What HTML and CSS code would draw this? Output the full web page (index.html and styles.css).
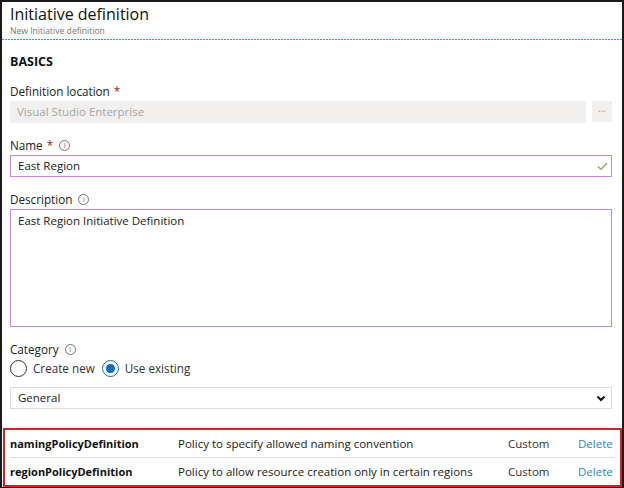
FILE: index.html
```html
<!DOCTYPE html>
<html>
<head>
<meta charset="utf-8">
<link rel="stylesheet" href="styles.css">
</head>
<body>
<div class="frame">
  <header class="head">
    <div class="title">Initiative definition</div>
    <div class="subtitle">New Initiative definition</div>
  </header>
  <div class="form">
    <div class="section">BASICS</div>
    <div class="field loc">
      <div class="label">Definition location <span class="req">*</span></div>
      <div class="row">
        <div class="input disabled">Visual Studio Enterprise</div>
        <div class="dots">...</div>
      </div>
    </div>
    <div class="field">
      <div class="label">Name <span class="req">*</span> <span class="info">i</span></div>
      <div class="input active">East Region
        <svg class="check" width="11" height="9" viewBox="0 0 11 9"><path d="M1 4.5 L4 7.5 L10 1" fill="none" stroke="#7cae5a" stroke-width="1.2"/></svg>
      </div>
    </div>
    <div class="field">
      <div class="label">Description <span class="info">i</span></div>
      <div class="textarea">East Region Initiative Definition</div>
    </div>
    <div class="field cat">
      <div class="label">Category <span class="info">i</span></div>
      <div class="radios">
        <span class="radio"></span><span class="rlabel">Create new</span>
        <span class="radio on"></span><span class="rlabel">Use existing</span>
      </div>
      <div class="select">General
        <svg class="chev" width="10" height="7" viewBox="0 0 10 7"><path d="M1.5 1.5 L5 5 L8.5 1.5" fill="none" stroke="#111" stroke-width="2"/></svg>
      </div>
    </div>
  </div>
  <div class="table">
    <div class="trow">
      <span class="c1">namingPolicyDefinition</span>
      <span class="c2">Policy to specify allowed naming convention</span>
      <span class="c3">Custom</span>
      <span class="c4">Delete</span>
    </div>
    <div class="trow">
      <span class="c1">regionPolicyDefinition</span>
      <span class="c2">Policy to allow resource creation only in certain regions</span>
      <span class="c3">Custom</span>
      <span class="c4">Delete</span>
    </div>
  </div>
</div>
</body>
</html>
```
FILE: styles.css
```css
* { box-sizing: border-box; }
html, body { margin: 0; padding: 0; background: #fff; }
body { font-family: "Open Sans", "Noto Sans", sans-serif; color: #1a1a1a; }
.frame {
  width: 624px; height: 488px;
  border: 2px solid #1a1a1a;
  border-bottom: 1px solid #1a1a1a;
  display: flex; flex-direction: column;
  overflow: hidden;
}
.head {
  flex: none;
  padding: 2px 8px 0;
  height: 38px;
  background: repeating-linear-gradient(90deg, #1ea5d8 0 2px, #ffffff 2px 3px) left bottom / 100% 1px no-repeat;
}
.title { font-size: 16px; line-height: 21px; color: #111; }
.subtitle { font-size: 8.6px; line-height: 11px; color: #777; margin-top: 1px; }
.form { padding: 13px 10px 0 8px; }
.section { font-size: 12.5px; font-weight: 700; line-height: 18px; color: #111; margin-bottom: 12px; }
.field { margin-bottom: 14px; }
.label { font-size: 11.7px; line-height: 16px; color: #222; margin-bottom: 2px; display: flex; align-items: center; gap: 4px; }
.req { color: #a4262c; }
.info {
  display: inline-flex; align-items: center; justify-content: center;
  width: 11px; height: 11px; border: 1px solid #777; border-radius: 50%;
  font-size: 7px; line-height: 1; color: #666; margin-left: 2px;
}
.row { display: flex; gap: 6px; }
.input {
  height: 22px; font-size: 11.5px; line-height: 20px; padding: 0 7px;
  position: relative;
}
.input.disabled { flex: 1; background: #f1f0ef; color: #a6a6a6; line-height: 22px; }
.dots { width: 20px; height: 21px; background: #f1f0ef; color: #999; font-size: 10px; text-align: center; line-height: 14px; }
.input.active { border: 1px solid #c48ad4; color: #1a1a1a; }
.check { position: absolute; right: 3px; top: 6px; }
.textarea {
  height: 118px; border: 1px solid #c48ad4; font-size: 11.5px; line-height: 18px;
  padding: 2px 7px;
}
.cat { margin-bottom: 0; }
.cat .label { margin-bottom: 2px; }
.radios { display: flex; align-items: center; font-size: 11.7px; height: 18px; margin-bottom: 10px; }
.radio {
  width: 17px; height: 17px; border: 1px solid #333; border-radius: 50%;
  display: inline-flex; align-items: center; justify-content: center; margin-right: 6px;
}
.radio.on::after { content: ""; width: 9px; height: 9px; border-radius: 50%; background: #0f6cbd; }
.radio.on { border-color: #0f6cbd; }
.rlabel { color: #333; margin-right: 7px; }
.select {
  height: 22px; border: 1px solid #ddd; font-size: 11.5px; line-height: 20px;
  padding: 0 7px; position: relative; color: #1a1a1a;
}
.chev { position: absolute; right: 5px; top: 7px; }
.table {
  margin: 19px 0 0 1px; width: 619px;
  border: 2px solid #d4202a;
  padding: 0 5px;
}
.trow {
  display: flex; align-items: center; height: 27px; font-size: 11.5px;
}
.trow + .trow { border-top: 1px solid #ddd; height: 28px; }
.c1 { width: 168px; font-weight: 700; font-size: 11px; color: #111; }
.c2 { width: 330px; color: #1a1a1a; }
.c3 { width: 70px; color: #333; }
.c4 { color: #2f86d0; }
```
